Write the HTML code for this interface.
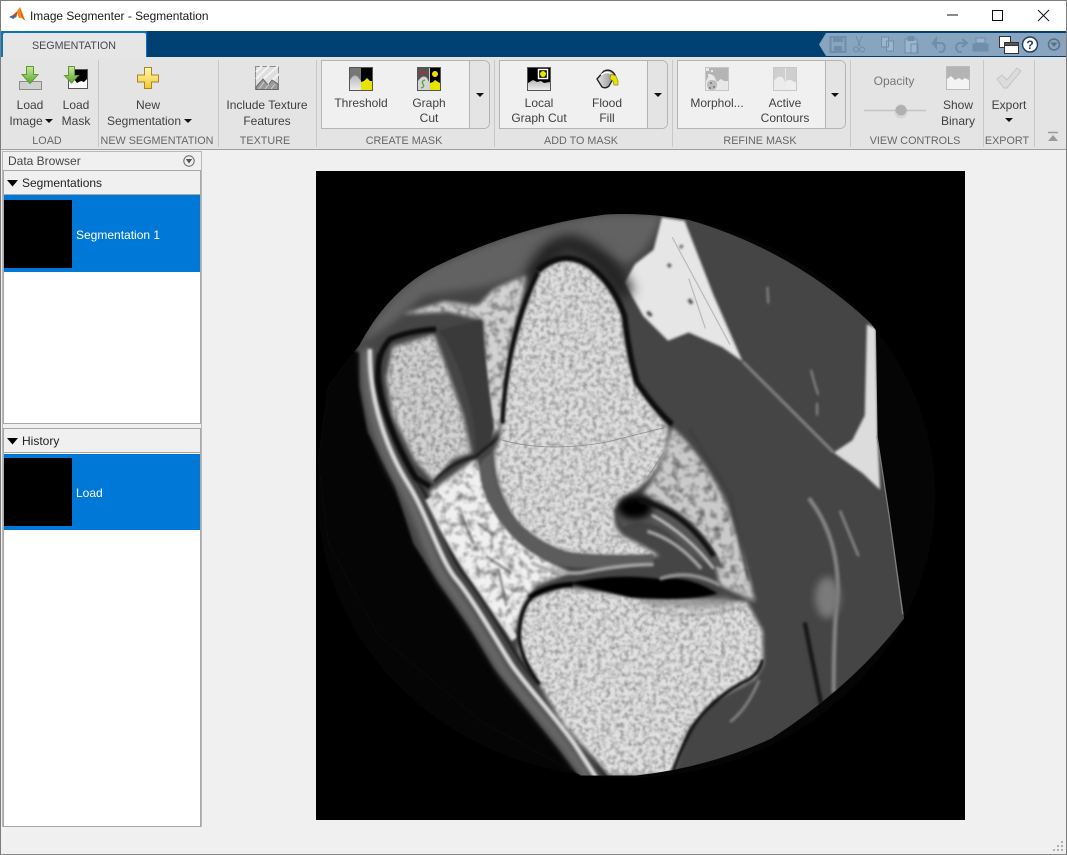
<!DOCTYPE html>
<html><head><meta charset="utf-8"><title>Image Segmenter - Segmentation</title>
<style>
html,body{margin:0;padding:0;width:1067px;height:855px;overflow:hidden;background:#f0f0f0;font-family:"Liberation Sans",sans-serif;font-size:12px;color:#404040}
div{position:absolute;box-sizing:border-box}
svg{position:absolute;overflow:visible}
.c{position:absolute;white-space:nowrap;transform:translateX(-50%);line-height:14px}
.l{position:absolute;white-space:nowrap;transform:translateX(-50%);line-height:13px;font-size:10.800px;color:#666;top:135px}
.sep{width:1px;top:60px;height:87px;background:#c8c8c8}
.g{color:#777}
.box{top:60px;height:69px;background:#f0f0f0;border:1px solid #b4b4b4;border-radius:0 6px 6px 0}
.dr{top:0;bottom:0;width:20px;right:0;background:#e4e4e4;border-left:1px solid #b4b4b4;border-radius:0 5px 5px 0}
.tri{width:0;height:0;border-left:4.500px solid transparent;border-right:4.500px solid transparent;border-top:4.500px solid #111}
</style></head><body>
<div style="left:0;top:0;width:1067px;height:855px;border:1px solid #7d7d7d;border-bottom-color:#8a8a8a;z-index:9"></div>
<div style="left:0;top:0;width:1067px;height:31px;background:#fff"></div>
<svg style="left:9px;top:7px" width="17" height="17" viewBox="0 0 17 17"><path d="M0 10L5 7.500 7 9 4.500 12z" fill="#2a6fb5"/><path d="M4 8L9 3.500 7 11z" fill="#c9481b"/><path d="M8 4L11 0C12.500 3 14.500 9 16.500 14 14 12 12 10 10 11 9 9 8.500 7 8 4z" fill="#ef8a1f"/><path d="M11 1.500C12 5 13.500 9 16 13.500 13 11.500 12 9 11 1.500z" fill="#d9531e"/></svg>
<span style="position:absolute;left:30px;top:9px;line-height:14px;font-size:11.900px;color:#1a1a1a;white-space:nowrap">Image Segmenter - Segmentation</span>
<svg style="left:0;top:0" width="1067" height="31"><path d="M947 15h11" stroke="#111" fill="none"/><rect x="992.500" y="10.500" width="10" height="10" stroke="#111" fill="none"/><path d="M1038 10l11 11M1049 10l-11 11" stroke="#111" fill="none"/></svg>

<div style="left:1px;top:31px;width:1065px;height:26px;background:#004173"></div>
<div style="left:1px;top:31px;width:146px;height:26px;background:#0a74bb"></div>
<div style="left:3px;top:33px;width:143px;height:24px;background:#e6e6e6;border-radius:2px 2px 0 0"></div>
<span class="c" style="left:74px;top:39px;font-size:10.700px;color:#4a4450">SEGMENTATION</span>

<svg style="left:818px;top:33px" width="248" height="23"><path d="M8 0H248V23H8L1 11.500z" fill="#88a4bf"/>
<g fill="#6f8ea9" stroke="#6f8ea9">
<path d="M12.500 4h15v15h-15z" fill="none" stroke-width="2"/><rect x="15" y="3" width="10" height="6" stroke="none"/><rect x="16" y="13" width="8" height="6" stroke="none"/>
<path d="M44 3l-4 10M38 3l4 10" fill="none"/><circle cx="38" cy="16.500" r="2.500" fill="none"/><circle cx="44" cy="16.500" r="2.500" fill="none"/>
<path d="M63.500 4h7v10h-7z M68.500 8h7v10h-7z" fill="#9db4ca"/>
<path d="M87 6h12v14h-12z M93 11h7v9h-7z" fill="#9db4ca"/><rect x="90" y="3.500" width="6" height="4"/>
<path d="M121 10h-6l3-4v8l-3-4M116 10h8a5 5 0 0 1 0 9h-3" fill="none" stroke-width="2"/>
<path d="M149 10h-8a5 5 0 0 0 0 9h3M144 6l5 4-5 4" fill="none" stroke-width="2"/>
<path d="M155 11h15v7h-15z"/><rect x="158" y="5" width="9" height="5" fill="#9db4ca"/>
</g>
<g fill="#fff" stroke="#333"><rect x="181.500" y="3.500" width="11" height="11"/><rect x="186.500" y="9.500" width="14" height="11"/><path d="M186.500 9.500h14v3h-14z" fill="#555"/></g>
<circle cx="212" cy="11.500" r="7.500" fill="#fff" stroke="#27415c" stroke-width="1.500"/>
<text x="212" y="16" text-anchor="middle" font-size="12" font-weight="bold" fill="#1d3a5a" font-family="Liberation Sans">?</text>
<circle cx="236" cy="11.500" r="5.500" fill="none" stroke="#5d6f82" stroke-width="1.500"/><path d="M232.500 9.500h7L236 14z" fill="#5d6f82"/>
</svg>

<div style="left:1px;top:57px;width:1065px;height:92px;background:#e4e4e4"></div>
<div style="left:1px;top:149px;width:1065px;height:1px;background:#a0a0a0"></div>
<div class="sep" style="left:98px"></div><div class="sep" style="left:218px"></div><div class="sep" style="left:316px"></div><div class="sep" style="left:494px"></div><div class="sep" style="left:672px"></div><div class="sep" style="left:850px"></div><div class="sep" style="left:983px"></div><div class="sep" style="left:1034px"></div>

<div class="box" style="left:321px;width:169px"><div class="dr"></div></div>
<div class="box" style="left:499px;width:169px"><div class="dr"></div></div>
<div class="box" style="left:677px;width:169px"><div class="dr"></div></div>

<svg style="left:0;top:57px" width="1067" height="92" viewBox="0 57 1067 92">
<defs>
<linearGradient id="gr" x1="0" y1="0" x2="0" y2="1"><stop offset="0" stop-color="#c9e89a"/><stop offset="1" stop-color="#5da832"/></linearGradient>
<linearGradient id="ye" x1="0" y1="0" x2="0" y2="1"><stop offset="0" stop-color="#fff8b8"/><stop offset="1" stop-color="#f2c82c"/></linearGradient>
<linearGradient id="gl" x1="0" y1="0" x2="0" y2="1"><stop offset="0" stop-color="#b8b8b8"/><stop offset="1" stop-color="#ededed"/></linearGradient>
<linearGradient id="bk" x1="0" y1="0" x2="1" y2="0"><stop offset="0" stop-color="#e8e8e8"/><stop offset="1" stop-color="#888"/></linearGradient>
</defs>
<path d="M19.500 81.500h22v8h-22z" fill="#d0d0d0" stroke="#8c8c8c"/>
<path d="M26.500 66.500h7v8h4.500l-8 9-8-9h4.500z" fill="url(#gr)" stroke="#5c9a30"/>
<rect x="68.500" y="69.500" width="19" height="19" fill="#fff" stroke="#555"/><path d="M70 70h17v9l-3 3-3-1-4 2-3-4-4 1z" fill="#000"/>
<path d="M68.500 66.500h6v9h4l-7 7.500-7-7.500h4z" fill="url(#gr)" stroke="#5c9a30"/>
<path d="M144.500 67.500h7v7.500h7v7h-7v6.500h-7v-6.500h-7v-7h7z" fill="url(#ye)" stroke="#a8852a"/>
<rect x="255.500" y="66.500" width="23" height="23" fill="#dedede" stroke="#8e8e8e"/>
<path d="M256 72l6-6M256 79l13-13M260 82l18-16M268 84l11-10" stroke="#f3f3f3" stroke-width="2"/>
<path d="M256 87l7-8 5 6 4-5 6 4v5.500h-22z" fill="#9a9a9a" stroke="#666"/><path d="M259 89l5-7M265 89l4-5M271 89l4-5" stroke="#d0d0d0"/>
<rect x="349.500" y="67.500" width="23" height="23" fill="#000" stroke="#555"/>
<rect x="350" y="68" width="11" height="22" fill="#777"/>
<path d="M350 90V80q4-7 8-3l3 4V90z" fill="url(#gl)"/>
<path d="M361 90V82l3-1 3-3 3 3 2 0V90z" fill="#e8e400"/>
<rect x="417.500" y="67.500" width="23" height="23" fill="#000" stroke="#555"/>
<rect x="418" y="68" width="11" height="22" fill="#555"/>
<path d="M418 90V81q5-7 9-3l2 4V90z" fill="#d5d5d5"/>
<path d="M420 74q3-4 6 0" stroke="#d42020" stroke-width="1.300" fill="none"/><path d="M425 80q-4 1-2 4t-2 4" stroke="#4aa83a" stroke-width="1.300" fill="none"/>
<rect x="429" y="68" width="1" height="22" fill="#ccc"/>
<circle cx="435" cy="74" r="3" fill="#e8e400"/><path d="M430 90V83l3-1 2-2 3 2 2 1V90z" fill="#e8e400"/>
<rect x="527.500" y="67.500" width="23" height="23" fill="#000" stroke="#555"/>
<path d="M528 90V83l5-3 4 2 4-1 3 2 6-1V90z" fill="url(#gl)"/>
<rect x="538.500" y="69.500" width="9" height="9" fill="#000" stroke="#fff" stroke-width="1.500"/><circle cx="543" cy="74" r="3" fill="#e8e400"/>
<path d="M597 79L604 71Q611 68 615 75L609 86Q606 89 602 87z" fill="url(#bk)" stroke="#222" stroke-width="1.400"/><path d="M601 75Q607 70 613 75" fill="none" stroke="#fff" stroke-width="1.500"/>
<path d="M611 74l5 2 2 5v4h-4l-1-4-3-2z" fill="#e8e400" stroke="#8a8a20" stroke-width=".7"/>
<rect x="705.500" y="67.500" width="23" height="23" fill="#b4b4b4" stroke="#c6c6c6"/>
<path d="M706 90V81l4-7 4 2 3 6 4-3 3 2 4 0V90z" fill="#e8e8e8"/>
<path d="M712 80q5 0 5 5 0 5-5 5-5 0-5-5 0-5 5-5z" fill="#bbb"/>
<path d="M706 68h3v3h-3zM711 70h2v2h-2zM708 74h2v2h-2z" fill="#e8e8e8"/><path d="M710 82h2v2h-2zM713 86h2v2h-2zM709 87h2v2h-2z" fill="#888"/>
<rect x="773.500" y="67.500" width="23" height="23" fill="#cfcfcf" stroke="#c8c8c8"/>
<path d="M774 90V81q5-7 9-3l2 4V90z" fill="#ececec"/><path d="M785 90V82l3-2 3 0 3 2 2 0V90z" fill="#eee"/><rect x="785" y="68" width="1" height="22" fill="#e8e8e8"/>
<rect x="946.500" y="66.500" width="23" height="23" fill="#b4b4b4" stroke="#bbb"/><path d="M947 89V79l4-3 4 4 4-2 3 2 3-2 4 2V89z" fill="#f3f3f3"/>
<path d="M997 79l5-4 5 5 10-12 4 3-14 17-3 0z" fill="#dcdcdc" stroke="#c4c4c4"/>
<path d="M864 110.500h62" stroke="#c4c4c4" stroke-width="1.500"/><circle cx="901" cy="110" r="5.500" fill="#bcbcbc"/><circle cx="901" cy="112" r="6.500" fill="#000" opacity=".06"/>
<path d="M1048 132.500h10" stroke="#9a9a9a" stroke-width="1.500"/><path d="M1048 141l5-6 5 6z" fill="#9a9a9a"/>
</svg>

<span class="c" style="left:30px;top:98px">Load</span>
<span class="c" style="left:26px;top:114px">Image</span><div class="tri" style="left:45px;top:119px"></div>
<span class="c" style="left:76px;top:98px">Load</span><span class="c" style="left:76px;top:114px">Mask</span>
<span class="c" style="left:148px;top:98px">New</span><span class="c" style="left:144px;top:114px">Segmentation</span><div class="tri" style="left:184px;top:119px"></div>
<span class="c" style="left:267px;top:98px">Include Texture</span><span class="c" style="left:267px;top:114px">Features</span>
<span class="c" style="left:361px;top:96px">Threshold</span>
<span class="c" style="left:429px;top:96px">Graph</span><span class="c" style="left:429px;top:111px">Cut</span>
<div class="tri" style="left:476px;top:93px"></div>
<span class="c" style="left:539px;top:96px">Local</span><span class="c" style="left:539px;top:111px">Graph Cut</span>
<span class="c" style="left:607px;top:96px">Flood</span><span class="c" style="left:607px;top:111px">Fill</span>
<div class="tri" style="left:654px;top:93px"></div>
<span class="c" style="left:717px;top:96px">Morphol...</span>
<span class="c" style="left:785px;top:96px">Active</span><span class="c" style="left:785px;top:111px">Contours</span>
<div class="tri" style="left:831px;top:93px"></div>
<span class="c g" style="left:894px;top:74px">Opacity</span>
<span class="c" style="left:958px;top:98px">Show</span><span class="c" style="left:958px;top:114px">Binary</span>
<span class="c" style="left:1009px;top:98px">Export</span><div class="tri" style="left:1005px;top:118px"></div>

<span class="l" style="left:47px">LOAD</span><span class="l" style="left:157px">NEW SEGMENTATION</span><span class="l" style="left:265px">TEXTURE</span><span class="l" style="left:404px">CREATE MASK</span><span class="l" style="left:581px">ADD TO MASK</span><span class="l" style="left:760px">REFINE MASK</span><span class="l" style="left:915px">VIEW CONTROLS</span><span class="l" style="left:1007px">EXPORT</span>

<div style="left:2px;top:151px;width:200px;height:676px;background:#f0f0f0;border:1px solid #b8b8b8"></div>
<span style="position:absolute;left:8px;top:154px;line-height:14px;color:#444;white-space:nowrap">Data Browser</span>
<svg style="left:183px;top:155px" width="12" height="12"><circle cx="6" cy="6" r="5.200" fill="none" stroke="#666"/><path d="M2.800 4h6.400L6 8.500z" fill="#555"/></svg>
<div style="left:3px;top:170px;width:198px;height:25px;background:#f0f0f0;border:1px solid #a8a8a8"></div>
<svg style="left:7px;top:180px" width="12" height="7"><path d="M0 0h11L5.500 6.500z" fill="#000"/></svg>
<span style="position:absolute;left:22px;top:176px;line-height:14px;color:#222;white-space:nowrap">Segmentations</span>
<div style="left:3px;top:195px;width:198px;height:229px;background:#fff;border:1px solid #a8a8a8;border-top:0"></div>
<div style="left:4px;top:195px;width:196px;height:77px;background:#0078d7"></div>
<div style="left:4px;top:200px;width:68px;height:68px;background:#000"></div>
<span style="position:absolute;left:76px;top:228px;line-height:14px;color:#fff;white-space:nowrap">Segmentation 1</span>
<div style="left:3px;top:428px;width:198px;height:25px;background:#f0f0f0;border:1px solid #a8a8a8"></div>
<svg style="left:7px;top:438px" width="12" height="7"><path d="M0 0h11L5.500 6.500z" fill="#000"/></svg>
<span style="position:absolute;left:22px;top:434px;line-height:14px;color:#222;white-space:nowrap">History</span>
<div style="left:3px;top:453px;width:198px;height:374px;background:#fff;border:1px solid #a8a8a8;border-top:0"></div>
<div style="left:4px;top:454px;width:196px;height:76px;background:#0078d7"></div>
<div style="left:4px;top:458px;width:68px;height:68px;background:#000"></div>
<span style="position:absolute;left:76px;top:486px;line-height:14px;color:#fff;white-space:nowrap">Load</span>

<svg style="left:316px;top:171px;overflow:hidden" width="649" height="649" viewBox="0 0 1567 1567">
<defs>
<filter id="b3" filterUnits="userSpaceOnUse" x="0" y="0" width="1567" height="1567" color-interpolation-filters="sRGB"><feGaussianBlur stdDeviation="3.500"/></filter>
<filter id="b8" filterUnits="userSpaceOnUse" x="0" y="0" width="1567" height="1567" color-interpolation-filters="sRGB"><feGaussianBlur stdDeviation="9"/></filter>
<filter id="b14" filterUnits="userSpaceOnUse" x="0" y="0" width="1567" height="1567" color-interpolation-filters="sRGB"><feGaussianBlur stdDeviation="15"/></filter>
<filter id="nz" filterUnits="userSpaceOnUse" x="0" y="0" width="1567" height="1567" color-interpolation-filters="sRGB">
<feGaussianBlur in="SourceGraphic" stdDeviation="5" result="b"/>
<feTurbulence type="fractalNoise" baseFrequency=".09" numOctaves="2" seed="4"/>
<feColorMatrix values="0 0 0 0 0  0 0 0 0 0  0 0 0 0 0  0 0 0 .7 -.27"/>
<feGaussianBlur stdDeviation="1.500"/>
<feComposite in2="b" operator="in" result="n"/>
<feMerge><feMergeNode in="b"/><feMergeNode in="n"/></feMerge></filter>
<filter id="nw" filterUnits="userSpaceOnUse" x="0" y="0" width="1567" height="1567" color-interpolation-filters="sRGB">
<feGaussianBlur in="SourceGraphic" stdDeviation="5" result="b"/>
<feTurbulence type="fractalNoise" baseFrequency=".05" numOctaves="2" seed="8"/>
<feColorMatrix values="0 0 0 0 0  0 0 0 0 0  0 0 0 0 0  0 0 0 1.100 -.47"/>
<feGaussianBlur stdDeviation="2"/>
<feComposite in2="b" operator="in" result="n"/>
<feMerge><feMergeNode in="b"/><feMergeNode in="n"/></feMerge></filter>
<clipPath id="clp"><path d="M105 420Q180 280 300 225 500 130 700 105 800 100 900 118 1150 190 1340 368L1352 385 1356 640 1385 830 1420 1080Q1300 1240 1100 1370 950 1440 770 1460H640L400 1330 150 1120 30 900 5 700 30 520z"/></clipPath>
</defs>
<rect width="1567" height="1567" fill="#000"/>
<ellipse cx="750" cy="785" rx="745" ry="680" fill="#050505"/>
<g clip-path="url(#clp)">
<rect width="1567" height="1567" fill="#454545"/>
<path d="M105 420Q180 280 300 225 500 130 700 105L835 105Q810 190 745 225L640 180 560 190 510 250 400 280 260 300 180 370z" fill="#626262" filter="url(#b8)"/>
<path d="M210 345L310 315 390 325 430 285 510 250 475 400 448 620 420 640 405 470 405 360 320 340z" fill="#d2d2d2" filter="url(#nw)"/>
<path d="M835 112L890 120 960 300 1030 460 980 425 900 390 850 410 790 350 745 270 770 225 815 190z" fill="#e6e6e6" filter="url(#b3)"/>
<path d="M800 340l10 10M900 310l8 10M850 225l6 6M880 180l4 5" stroke="#444" stroke-width="8" filter="url(#b3)"/>
<path d="M860 160L1000 420M900 260l40 120" stroke="#bbb" stroke-width="3"/>
<path d="M1330 370L1352 380 1356 640 1362 770 1320 730 1250 680 1295 650 1325 590z" fill="#dcdcdc" filter="url(#b3)"/>
<path d="M1356 640L1385 830 1418 1070" stroke="#7c7c7c" stroke-width="6" fill="none"/>
<path d="M1030 460L1250 680" stroke="#8e8e8e" stroke-width="6" fill="none" filter="url(#b3)"/>
<path d="M1090 280l2 40M1195 480q10 40 18 60M1210 560l0 30" stroke="#999" stroke-width="4" fill="none" filter="url(#b3)"/>
<path d="M1190 790Q1260 880 1260 1010 1250 1100 1250 1260" stroke="#858585" stroke-width="10" fill="none" filter="url(#b3)"/>
<path d="M1265 820l45 110" stroke="#8a8a8a" stroke-width="6" filter="url(#b3)"/>
<ellipse cx="1235" cy="1030" rx="30" ry="50" fill="#7a7a7a" filter="url(#b8)"/>
<path d="M1180 1090L1220 1290" stroke="#151515" stroke-width="10" filter="url(#b3)"/>
<path d="M860 620Q930 680 990 800 1040 950 1060 1040L975 1000 960 930 850 810 790 780 830 720z" fill="#cacaca" filter="url(#nw)"/>
<path d="M900 620L1000 780 1045 990" stroke="#3c3c3c" stroke-width="4" fill="none" filter="url(#b3)"/>
<!-- outer wedge -->
<path d="M0 380L105 440 105 520 125 630 190 760 235 900 300 1000 370 1100 430 1200 510 1300 590 1400 650 1480 0 1567z" fill="#050505" filter="url(#b3)"/>
<!-- skin -->
<path d="M122 430C118 560 160 680 205 755S280 950 316 995 420 1150 446 1195 560 1330 606 1395L660 1470" stroke="#6e6e6e" stroke-width="22" fill="none" filter="url(#b8)"/>
<path d="M130 430C128 560 175 680 222 755S300 940 338 985 440 1140 468 1185 580 1320 625 1385L680 1470" stroke="#dcdcdc" stroke-width="11" fill="none" filter="url(#b3)"/>
<path d="M150 440C150 560 195 680 242 745S320 930 358 975 460 1130 488 1175 600 1310 645 1380L705 1470" stroke="#222" stroke-width="7" fill="none" filter="url(#b3)"/>
<path d="M272 790Q330 910 380 980T480 1130" stroke="#e4e4e4" stroke-width="18" fill="none" filter="url(#b3)"/>
<!-- fat below patella -->
<path d="M275 775L385 695 420 780 480 870 550 935 610 970 530 1000 500 1050 480 1110 450 1095 360 960 300 860z" fill="#f0f0f0" filter="url(#nw)"/>
<path d="M390 850l40 30M410 930l60 40M440 960l20 90M350 830l30 70" stroke="#555" stroke-width="4" fill="none" filter="url(#b3)"/>
<path d="M295 385Q340 440 370 560 390 640 385 690 420 670 430 620 410 470 400 360 350 370 295 385z" fill="#3a3a3a" filter="url(#b3)"/>
<path d="M185 425L285 395 320 490 355 590 375 680 330 695 285 750 240 700 185 590 170 500z" fill="#d2d2d2" filter="url(#nz)"/>
<path d="M290 382Q230 385 180 405 145 440 150 510 165 610 240 740L275 762" stroke="#0c0c0c" stroke-width="13" fill="none" filter="url(#b3)"/>
<path d="M285 750Q330 700 385 690L445 640" stroke="#1a1a1a" stroke-width="7" fill="none" filter="url(#b3)"/>
<path d="M520 265Q560 170 620 175 700 200 750 300" stroke="#202020" stroke-width="40" fill="none" filter="url(#b14)"/>
<path d="M540 245Q600 190 660 235 715 280 740 350 750 440 770 510 810 570 850 615 850 680 815 730 780 770 740 790 700 840 740 880 800 910 830 930 700 930 620 925 530 900 480 840 430 760 430 680 450 640 450 590 470 400 540 245z" fill="#dedede" filter="url(#nz)"/>
<path d="M450 610Q460 400 535 245" stroke="#0a0a0a" stroke-width="10" fill="none" filter="url(#b3)"/>
<path d="M535 240Q600 185 665 232 720 275 745 350 755 440 775 510 815 570 860 612" stroke="#0c0c0c" stroke-width="13" fill="none" filter="url(#b3)"/>
<path d="M450 650Q560 680 700 655 800 630 840 620M840 680L800 740" stroke="#8a8a8a" stroke-width="2" fill="none"/>
<path d="M400 700Q385 760 440 840 500 930 600 955 720 965 815 945L815 925Q700 935 600 920 510 890 465 820 425 750 425 680z" fill="#5c5c5c" filter="url(#b3)"/>
<path d="M520 945Q570 975 640 970 740 950 815 950" stroke="#aaa" stroke-width="8" fill="none" filter="url(#b3)"/>
<path d="M720 820Q770 780 860 815 940 860 985 960 920 950 860 880 800 830 740 860z" fill="#555" filter="url(#b3)"/>
<path d="M810 830Q900 880 960 960" stroke="#ccc" stroke-width="6" fill="none" filter="url(#b3)"/>
<path d="M800 870Q870 890 930 960" stroke="#aaa" stroke-width="8" fill="none" filter="url(#b3)"/>
<ellipse cx="770" cy="812" rx="42" ry="28" fill="#000" filter="url(#b8)"/>
<path d="M780 795Q890 820 960 930" stroke="#111" stroke-width="12" fill="none" filter="url(#b3)"/>
<path d="M510 1035L600 1005 800 1030 1040 1040 1078 1110 1080 1190 1060 1225 960 1280 900 1350 860 1460 710 1460 600 1340 490 1160 490 1100z" fill="#e0e0e0" filter="url(#nz)"/>
<path d="M520 1030Q490 1060 490 1130 500 1190 540 1240" stroke="#0a0a0a" stroke-width="9" fill="none" filter="url(#b3)"/>
<path d="M1078 1180Q1070 1220 1030 1235 950 1280 905 1350 880 1400 862 1450" stroke="#0c0c0c" stroke-width="8" fill="none" filter="url(#b3)"/>
<path d="M800 1060Q900 1090 1040 1050" stroke="#888" stroke-width="3" fill="none" filter="url(#b3)"/>
<path d="M780 1032Q880 1050 1000 1040" stroke="#8a8a8a" stroke-width="18" fill="none" filter="url(#b8)"/>
<path d="M610 995Q720 970 830 985 900 975 970 1020 900 1040 760 1030 680 1010 610 995z" fill="#000" filter="url(#b3)"/>
<path d="M515 1030Q560 1000 620 998" stroke="#000" stroke-width="12" fill="none" filter="url(#b3)"/>
<path d="M830 985Q900 960 975 1000" stroke="#999" stroke-width="8" fill="none" filter="url(#b3)"/>
<path d="M1070 1230Q1040 1300 1000 1330" stroke="#8a8a8a" stroke-width="6" fill="none" filter="url(#b3)"/>
</g>
</svg>

<svg style="left:1053px;top:841px" width="12" height="12"><g fill="#b0b0b0"><rect x="8" y="0" width="2" height="2"/><rect x="4" y="4" width="2" height="2"/><rect x="8" y="4" width="2" height="2"/><rect x="0" y="8" width="2" height="2"/><rect x="4" y="8" width="2" height="2"/><rect x="8" y="8" width="2" height="2"/></g></svg>
</body></html>
